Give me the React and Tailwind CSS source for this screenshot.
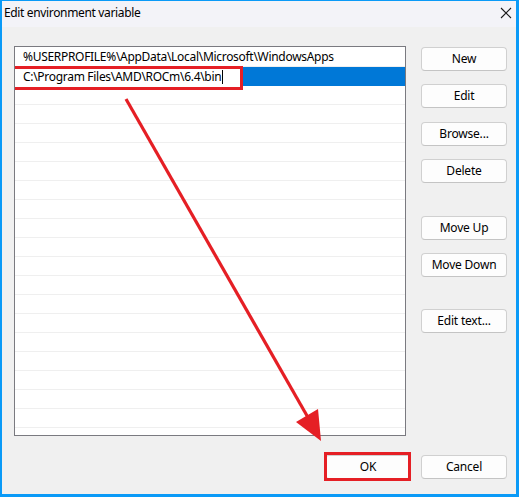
import React from "react";

const Btn = ({ children, className = "" }) => (
  <div
    className={`w-[86px] h-[24px] flex items-center justify-center bg-[#fdfdfd] border border-[#d0d0d0] border-b-[#c4c4c4] rounded-[4px] text-black text-[12px] tracking-[-0.2px] ${className}`}
  >
    {children}
  </div>
);

export default function App() {
  const rows = Array.from({ length: 20 });
  return (
    <div className="w-[519px] h-[497px] relative flex flex-col border-[#0a9af7] border-t border-l-2 border-r-[3px] border-b-[3px] font-['Noto_Sans',sans-serif] text-[12px] text-black overflow-hidden">
      <div className="h-[26px] bg-[#f3f3f8] flex items-start justify-between pl-[2px] pr-[4px] pt-[5px]">
        <span className="text-[12px] leading-[14px] tracking-[-0.35px]">Edit environment variable</span>
        <svg width="12" height="12" viewBox="0 0 12 12" className="mt-[1px]">
          <path d="M1 1 L11 11 M11 1 L1 11" stroke="#1a1a1a" strokeWidth="1.1" />
        </svg>
      </div>
      <div className="flex-1 bg-[#f0f0f0] flex flex-col">
        <div className="flex pt-[19px] pl-[12px]">
          <div className="w-[392px] h-[390px] bg-white border border-[#7a7a80] pt-[1px] overflow-hidden tracking-[-0.3px]">
            <div className="h-[19px] border-b border-[#efefef] flex items-center pl-[8px] whitespace-nowrap">
              %USERPROFILE%\AppData\Local\Microsoft\WindowsApps
            </div>
            <div className="h-[19px] bg-[#0078d7] relative flex">
              <div className="w-[225px] h-[19px] bg-white flex items-center pl-[8px] whitespace-nowrap">
                C:\Program Files\AMD\ROCm\6.4\bin
                <span className="inline-block w-[1px] h-[14px] bg-black ml-[1px]" />
              </div>
              <div className="absolute left-[-3px] top-[-1px] w-[231px] h-[24px] border-[3px] border-[#e51f25]" />
            </div>
            {rows.map((_, i) => (
              <div key={i} className="h-[19px] border-b border-[#efefef]" />
            ))}
          </div>
          <div className="ml-[15px] flex flex-col">
            <Btn className="mt-[1px]">New</Btn>
            <Btn className="mt-[13px]">Edit</Btn>
            <Btn className="mt-[14px]">Browse...</Btn>
            <Btn className="mt-[13px]">Delete</Btn>
            <Btn className="mt-[33px]">Move Up</Btn>
            <Btn className="mt-[13px]">Move Down</Btn>
            <Btn className="mt-[32px]">Edit text...</Btn>
          </div>
        </div>
        <div className="flex justify-end gap-[10px] pr-[9px] mt-[19px]">
          <div className="relative">
            <Btn className="w-[85px] border-[#0067c0] border-b-[#0067c0]">OK</Btn>
            <div className="absolute left-[-1px] top-[-3px] w-[87px] h-[29px] border-[3px] border-[#e51f25]" />
          </div>
          <Btn>Cancel</Btn>
        </div>
      </div>
      <svg
        className="absolute left-0 top-0 pointer-events-none"
        width="519"
        height="497"
        viewBox="0 0 519 497"
      >
        <line x1="124" y1="98" x2="308" y2="420" stroke="#e51f25" strokeWidth="3.2" />
        <polygon points="319,440 316,408 294,421" fill="#e51f25" />
      </svg>
    </div>
  );
}
